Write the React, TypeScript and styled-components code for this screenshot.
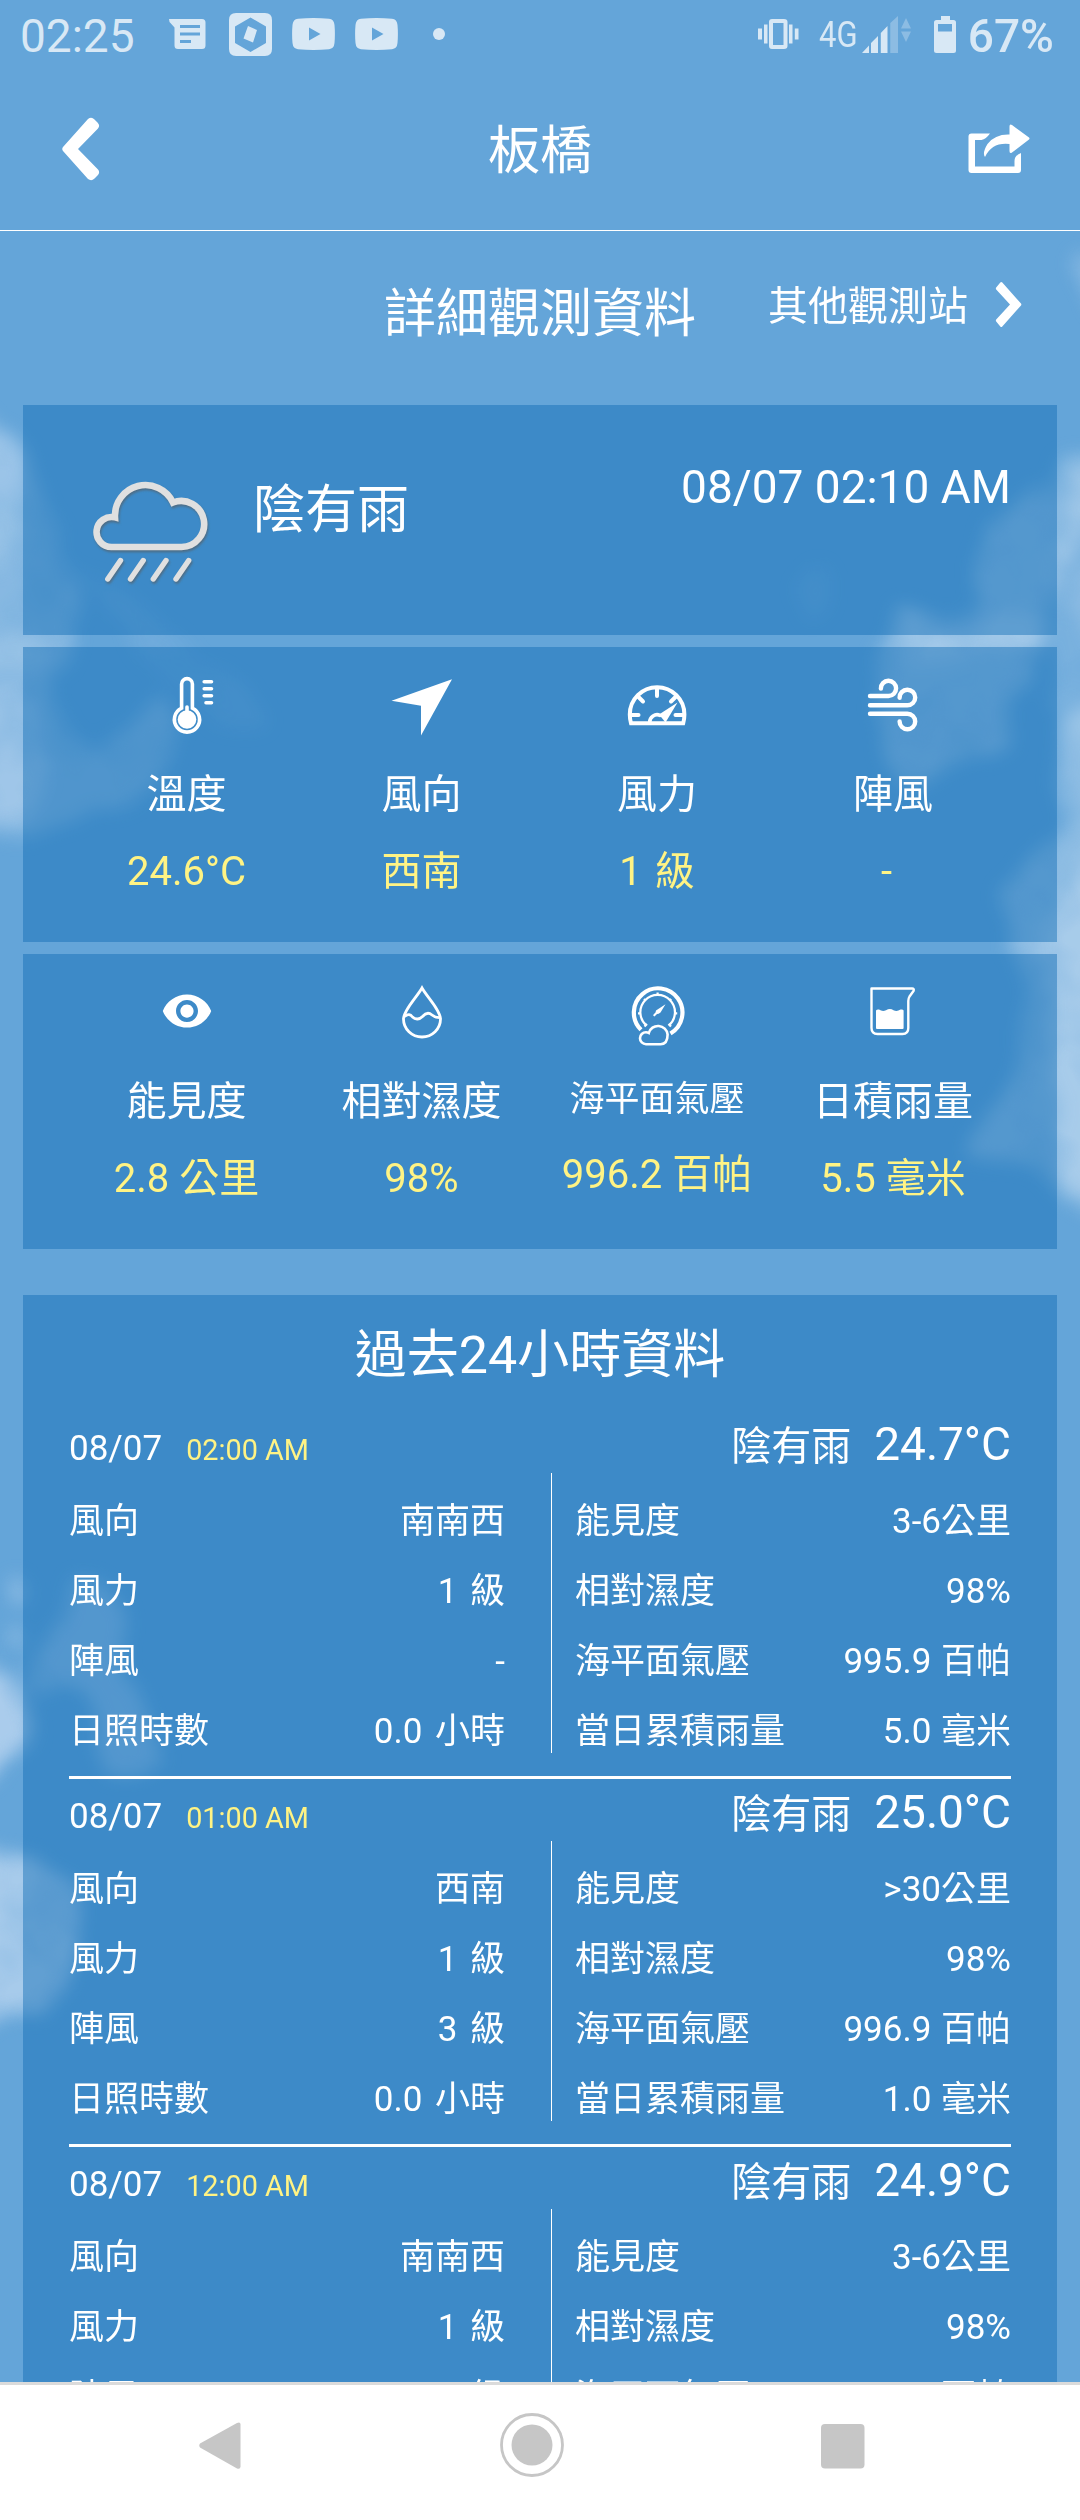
import * as React from 'react';
import styled, { createGlobalStyle } from 'styled-components';

const GlobalStyle = createGlobalStyle`
  * {
    box-sizing: border-box;
  }

  body {
    margin: 0;
    font-family: Roboto, 'Noto Sans CJK TC', sans-serif;
    color: #ffffff;
  }
`;

const Screen = styled.div`
  position: relative;
  isolation: isolate;
  width: 1080px;
  height: 2520px;
  display: flex;
  flex-direction: column;
  background: #64a5d9;
  overflow: hidden;
`;

const Sky = styled.svg`
  position: absolute;
  top: 0;
  left: 0;
  z-index: -1;
`;

const StatusBarWrapper = styled.div`
  height: 68px;
  flex: none;
  display: flex;
  align-items: center;
  justify-content: space-between;
  padding: 0 26px 0 20px;
  color: #d8e8f5;

  svg {
    display: block;
    fill: currentColor;
  }

  > div {
    display: flex;
    align-items: center;
  }
`;

const StatusText = styled.span<{ $weight?: number }>`
  font-size: 46px;
  font-weight: ${(p) => p.$weight ?? 400};
  line-height: 64px;
  padding-top: 3px;
`;

const NetworkType = styled.span`
  display: block;
  width: 38px;
  margin-left: 20px;
  font-size: 36px;
  line-height: 64px;
  padding-top: 2px;
  transform: scaleX(0.86);
  transform-origin: left center;
`;

const SignalIcon = styled.svg`
  margin-left: 5px;
`;

const BatteryIcon = styled.svg`
  margin: 0 12px 0 20px;
`;

const StatusIcons = styled.div`
  display: flex;
  align-items: center;
  gap: 20px;
  margin-left: 34px;

  > svg:first-child {
    margin-right: 3px;
  }
`;

const AppHeader = styled.header`
  height: 163px;
  flex: none;
  display: flex;
  align-items: center;
  justify-content: space-between;
  padding: 0 50px;
  border-bottom: 1px solid #ffffff;

  h1 {
    margin: 5px 0 0;
    font-size: 52px;
    line-height: 60px;
    font-weight: 400;
  }

  svg {
    display: block;
  }
`;

const HeaderSide = styled.div<{ $end?: boolean }>`
  width: 70px;
  display: flex;
  justify-content: ${(p) => (p.$end ? 'flex-end' : 'flex-start')};
  padding-left: ${(p) => (p.$end ? 0 : 10)}px;
`;

const Content = styled.main`
  flex: 1;
  min-height: 0;
  overflow: hidden;
  padding: 0 23px;
`;

const SectionHead = styled.div`
  height: 174px;
  display: grid;
  grid-template-columns: 1fr auto 1fr;
  align-items: start;
  padding: 50px 34px 0 34px;

  h2 {
    grid-column: 2;
    margin: 4px 0 0;
    font-size: 52px;
    line-height: 60px;
    font-weight: 400;
  }
`;

const StationLink = styled.a`
  display: flex;
  align-items: center;
  justify-content: flex-end;
  gap: 27px;
  font-size: 40px;
  line-height: 50px;

  svg {
    margin-bottom: 5px;
  }
`;

const Card = styled.section`
  background: rgba(14, 107, 180, 0.45);
`;

const SummaryCard = styled(Card)`
  height: 230px;
  margin-bottom: 12px;
  display: flex;
  padding: 51px 46px 0 67px;

  > svg {
    flex: none;
    margin-top: 22px;
    overflow: visible;
    filter: drop-shadow(1px 2px 1px rgba(90, 90, 90, 0.6));
  }
`;

const Weather = styled.div`
  flex: 1;
  margin: 25px 0 0 43px;
  font-size: 52px;
  line-height: 60px;
`;

const ObservedAt = styled.time`
  font-size: 46px;
  line-height: 63px;
`;

const MetricsCard = styled(Card)`
  height: 295px;
  margin-bottom: 12px;
  display: grid;
  grid-template-columns: 235px 235px 236px 236px;
  justify-content: center;
  padding-top: 29px;
`;

const Metric = styled.div`
  display: flex;
  flex-direction: column;
  align-items: center;
  white-space: pre;

  svg {
    overflow: visible;
    margin-bottom: 34px;
  }
`;

const MetricLabel = styled.div<{ $compact?: boolean }>`
  font-size: ${(p) => (p.$compact ? 35 : 40)}px;
  line-height: ${(p) => (p.$compact ? 46 : 50)}px;
  margin-bottom: 27px;
`;

const MetricValue = styled.div<{ $spaced?: boolean }>`
  font-size: 40px;
  line-height: 50px;
  word-spacing: ${(p) => (p.$spaced ? 3 : 0)}px;
  color: #fff384;
`;

const HistoryCard = styled(Card)`
  margin-top: 46px;
  padding: 21px 46px 0;

  h2 {
    margin: 0 0 15px;
    font-size: 52px;
    line-height: 80px;
    font-weight: 400;
    text-align: center;
  }
`;

const Entry = styled.article`
  border-bottom: 3px solid #ffffff;
  padding-bottom: 23px;
`;

const EntryHead = styled.div`
  height: 62px;
  padding-top: 4px;
  display: flex;
  align-items: baseline;
  line-height: 58px;
  font-size: 35px;
`;

const EntryTime = styled.time`
  flex: 1;
  margin-left: 24px;
  font-size: 28.8px;
  color: #fff384;
`;

const EntryWeather = styled.span`
  font-size: 40px;
  margin-right: 23px;
`;

const EntryTemp = styled.span`
  font-size: 46px;
`;

const EntryBody = styled.div`
  display: grid;
  grid-template-columns: 482px 1fr;
`;

const EntryColumn = styled.dl<{ $divided?: boolean }>`
  margin: 0;
  padding: ${(p) => (p.$divided ? '0 0 0 23px' : '0 46px 0 0')};
  border-left: ${(p) => (p.$divided ? '1px solid #ffffff' : 'none')};
  word-spacing: ${(p) => (p.$divided ? 1 : 4)}px;
`;

const EntryRow = styled.div`
  height: 70px;
  padding-top: 27px;
  display: flex;
  justify-content: space-between;
  font-size: 35px;
  line-height: 43px;
  white-space: pre;

  dd {
    margin: 0;
  }
`;

const NavBar = styled.nav`
  height: 138px;
  flex: none;
  display: grid;
  grid-template-columns: 439px 186px 435px;
  justify-items: center;
  padding-top: 28px;
  background: #ffffff;
  border-top: 3px solid #dbdbdb;

  svg {
    display: block;
  }
`;

function Clouds() {
  return (
    <Sky width="1080" height="2520" viewBox="0 0 1080 2520">
      <defs>
        <filter
          id="puff"
          filterUnits="userSpaceOnUse"
          x="-100"
          y="200"
          width="1280"
          height="2000"
          colorInterpolationFilters="sRGB"
        >
          <feTurbulence type="fractalNoise" baseFrequency="0.013" numOctaves="3" seed="7" result="noise" />
          <feDisplacementMap in="SourceGraphic" in2="noise" scale="44" xChannelSelector="R" yChannelSelector="G" />
          <feGaussianBlur stdDeviation="9" result="soft" />
          <feColorMatrix
            in="noise"
            type="matrix"
            values="0 0 0 0 1  0 0 0 0 1  0 0 0 0 1  0 0 0.8 0 0.55"
            result="density"
          />
          <feComposite in="soft" in2="density" operator="in" />
        </filter>
      </defs>
      <g filter="url(#puff)" fill="#cbdff4">
        <path
          d="M-40 410 Q20 420 40 480 Q60 520 70 580 Q90 650 60 665 L50 700 Q70 740 110 750 L160 690 Q190 730 160 780 Q110 840 -40 840 Z"
          opacity="0.34"
        />
        <ellipse cx="0" cy="460" rx="26" ry="38" opacity="0.3" />
        <ellipse cx="0" cy="540" rx="24" ry="36" opacity="0.25" />
        <ellipse cx="20" cy="650" rx="40" ry="22" opacity="0.25" />
        <ellipse cx="-5" cy="760" rx="50" ry="70" opacity="0.35" />
        <path d="M60 560 Q150 600 200 660 Q270 690 260 730 Q200 720 150 660 Z" opacity="0.12" />
        <path d="M1110 250 L1076 260 Q1072 300 1110 320 Z" opacity="0.4" />
        <path
          d="M1110 455 Q1060 450 1040 480 Q1000 500 985 550 Q985 600 960 625 Q920 600 900 625 Q880 680 880 740 Q890 790 930 790 Q960 760 1000 750 L1010 690 Q1050 650 1070 560 Z"
          opacity="0.42"
        />
        <path d="M1110 470 L1060 470 L1055 600 L1110 640 Z" opacity="0.25" />
        <path d="M1110 560 L1060 600 L1040 700 L1110 760 Z" opacity="0.2" />
        <ellipse cx="975" cy="632" rx="75" ry="26" opacity="0.32" />
        <path
          d="M1110 700 L1065 720 Q1060 790 1070 830 Q1020 850 1000 890 Q1030 940 1010 960 Q1040 1000 1020 1060 Q1010 1100 975 1145 Q1010 1170 1050 1180 L1110 1230 Z"
          opacity="0.42"
        />
        <path d="M1110 830 Q1070 860 1055 920 L1045 1000 Q1055 1100 1045 1160 L1110 1210 Z" opacity="0.42" />
        <path
          d="M70 1590 Q110 1580 125 1620 Q140 1700 170 1760 Q120 1790 95 1750 Q110 1700 60 1680 Q20 1710 30 1670 Q60 1620 70 1590 Z"
          opacity="0.4"
        />
        <path d="M-40 1670 Q20 1665 28 1710 Q34 1765 -40 1785 Z" opacity="0.68" />
        <path d="M-40 1850 Q40 1850 75 1890 Q90 1950 50 2010 L-40 2040 Z" opacity="0.65" />
        <ellipse cx="13" cy="1587" rx="9" ry="12" opacity="0.4" />
        <ellipse cx="16" cy="1635" rx="9" ry="14" opacity="0.35" />
        <ellipse cx="808" cy="590" rx="16" ry="26" opacity="0.1" />
      </g>
    </Sky>
  );
}

function PlayBadge() {
  return (
    <svg width="43" height="32" viewBox="0 0 43 32">
      <path
        fillRule="evenodd"
        d="M6 .8Q21.500-.8 37 .8Q42 1.300 42.500 7Q43.300 16 42.500 25Q42 30.700 37 31.200Q21.500 32.800 6 31.200Q1 30.700.500 25Q-.3 16 .500 7Q1 1.300 6 .8ZM17 9.500V22.500L28.500 16Z"
      />
    </svg>
  );
}

function StatusBar() {
  return (
    <StatusBarWrapper>
      <div>
        <StatusText>02:25</StatusText>
        <StatusIcons>
          <svg width="37" height="30" viewBox="0 0 37 30">
            <path
              fillRule="evenodd"
              d="M0 0H33Q36.500 0 36.500 3.500V26.500Q36.500 30 33 30H9Q5.500 30 5.500 26.500V8.500L.500 3ZM11 6V9H31V6ZM11 13.500V16.500H31V13.500ZM11 21V24H22V21Z"
            />
          </svg>
          <svg width="43" height="43" viewBox="0 0 43 43">
            <path
              fillRule="evenodd"
              d="M7 0H36Q43 0 43 7V36Q43 43 36 43H7Q0 43 0 36V7Q0 0 7 0ZM21.500 4.500L6 13.500V30L21.500 39L37 30V13.500ZM19 13L28 17L24 29.500L14.500 25.500Z"
            />
          </svg>
          <PlayBadge />
          <PlayBadge />
          <svg width="44" height="12" viewBox="0 0 44 12">
            <circle cx="21" cy="6" r="6" />
          </svg>
        </StatusIcons>
      </div>
      <div>
        <svg width="41" height="30" viewBox="0 0 41 30">
          <path
            fillRule="evenodd"
            d="M14 0H26Q29.500 0 29.500 3V27Q29.500 30 26 30H14Q11 30 11 27V3Q11 0 14 0ZM15 4V26H25.500V4ZM0 9.500H4V20.500H0ZM6 5.500H9.500V24.500H6ZM31 5.500H34.500V24.500H31ZM36.800 9.500H40.500V20.500H36.800Z"
          />
        </svg>
        <NetworkType>4G</NetworkType>
        <SignalIcon width="52" height="37" viewBox="0 0 52 37">
          <path d="M0 37L7 29.500V37ZM9 27L16 20V37H9ZM18.800 17L25.500 10V37H18.800Z" />
          <path opacity="0.35" d="M28.300 7L36 0V37H28.300ZM44 2L49 12.500H39ZM39 15.500H49L44 26Z" />
        </SignalIcon>
        <BatteryIcon width="22" height="37" viewBox="0 0 22 37">
          <path
            fillRule="evenodd"
            d="M7 0H16V4H19.500Q22 4 22 6.500V34.500Q22 37 19.500 37H2.500Q0 37 0 34.500V6.500Q0 4 2.500 4H7ZM4 8V15.500H18V8Z"
          />
        </BatteryIcon>
        <StatusText $weight={500}>67%</StatusText>
      </div>
    </StatusBarWrapper>
  );
}

function ThermometerIcon() {
  return (
    <svg width="60" height="60" viewBox="0 0 60 60" fill="none" stroke="#ffffff" strokeWidth="3.6" strokeLinecap="round">
      <path d="M24.600 32.100V8a5.400 5.400 0 0 1 10.800 0V32.100A12.600 12.600 0 1 1 24.600 32.100Z" />
      <circle cx="30" cy="43.500" r="9.300" fill="#ffffff" stroke="none" />
      <path d="M30 31V40" />
      <path d="M47.200 5.700H54.500M47.200 12.700H54.500M47.200 19.700H54.500M49 26.700H54.500" />
    </svg>
  );
}

function DirectionIcon() {
  return (
    <svg width="60" height="60" viewBox="0 0 60 60" fill="#ffffff">
      <path d="M60 3.300L-.500 24.700L29 29.800V59.500Z" />
    </svg>
  );
}

function SpeedIcon() {
  return (
    <svg width="60" height="60" viewBox="0 0 60 60" fill="none" stroke="#ffffff" strokeWidth="3.600" strokeLinecap="round">
      <path
        d="M4 47.200Q2.800 43 2.800 38.500A27.300 27.300 0 0 1 57.400 38.500Q57.400 43 56.200 47.200Z"
        strokeWidth="4"
        strokeLinecap="butt"
      />
      <path d="M30 12V20M4 39H11.500M48.500 39H56M11.500 21L16 25.500M48.500 21L44 25.500" strokeWidth="4" />
      <path d="M22.700 46A7.400 7.400 0 0 1 33 39.300" />
      <path d="M50.500 26.500L32 38.500L38.500 46.500Z" fill="#ffffff" stroke="none" />
    </svg>
  );
}

function GustIcon() {
  return (
    <svg width="60" height="60" viewBox="0 0 60 60" fill="none" stroke="#ffffff" strokeWidth="4.400" strokeLinecap="round">
      <path d="M7 20H25.500a7.600 7.600 0 1 0-7.600-7.400" />
      <path d="M7 29.300H44.400a7.800 7.800 0 1 0-7.800-7.600" />
      <path d="M7 37.700H44.400a7.800 7.800 0 1 1-7.800 7.800" />
    </svg>
  );
}

function EyeIcon() {
  return (
    <svg width="60" height="60" viewBox="0 0 60 60" fill="#ffffff">
      <path
        transform="translate(3.600 1.700) scale(2.200)"
        d="M12 4.500C7 4.500 2.730 7.610 1 12c1.730 4.390 6 7.500 11 7.500s9.270-3.110 11-7.500c-1.730-4.390-6-7.500-11-7.500zM12 17c-2.760 0-5-2.240-5-5s2.240-5 5-5 5 2.240 5 5-2.240 5-5 5zm0-8c-1.660 0-3 1.340-3 3s1.340 3 3 3 3-1.340 3-3-1.340-3-3-3z"
      />
    </svg>
  );
}

function HumidityIcon() {
  return (
    <svg width="60" height="60" viewBox="0 0 60 60" fill="none" stroke="#ffffff" strokeWidth="2.800">
      <path d="M30 5C25 14 11.500 27 11.500 36a18.500 18 0 0 0 37 0C48.500 27 35 14 30 5Z" />
      <path d="M12.500 33.500C16 30.500 18.500 31.500 20.500 34C23.500 37 27.500 36.500 30.500 33.500C34 29.500 37 29.500 40 32Q43 34.500 47.500 34.700" />
    </svg>
  );
}

function BarometerIcon() {
  return (
    <svg width="60" height="60" viewBox="0 0 60 60" fill="none" stroke="#ffffff">
      <path d="M14 46.800A24.300 24.300 0 1 1 43.500 50.500" strokeWidth="4.200" />
      <path d="M19.300 42.300A17.300 17.300 0 1 1 42 42.300" strokeWidth="2.200" />
      <path
        d="M30.600 9.500V12M13.500 30.300H11M47.700 30.300H50.200M18.800 17.800L17 16M42.400 17.800L44.200 16M20 41L17.500 43.500M41.500 41L44 43.500"
        strokeWidth="2.200"
      />
      <path
        d="M38.500 21.300L33.500 29.500Q31.500 31 30 31L27.500 33.500Q25.500 33 26.500 31.500L28.500 29.500Q28.500 27 30.500 26.500Z"
        fill="#ffffff"
        stroke="none"
      />
      <path d="M19 61.200a6 6 0 0 1 0-12q1.500 0 2.800.8A9.600 9.600 0 0 1 40.600 51.500q0 9.700-7 9.700Z" strokeWidth="2.600" />
    </svg>
  );
}

function RainGaugeIcon() {
  return (
    <svg width="60" height="60" viewBox="0 0 60 60" fill="none" stroke="#ffffff" strokeWidth="2.400" strokeLinejoin="round">
      <path d="M8.500 5.500H49Q51.500 5.500 50.500 8L46.500 13.500Q45.300 15.500 45.300 18V45Q45.300 51 39.500 51H14.500Q8.500 51 8.500 45Z" />
      <path
        d="M13 27.500Q14 26 16 26.500Q19.500 29 23 27.200Q27 25 30.500 27.200Q34 29 37.500 26.500Q40 26 40.600 27.500V45Q40.600 46 39.600 46H14Q13 46 13 45Z"
        fill="#ffffff"
        stroke="none"
      />
    </svg>
  );
}

interface MetricItem {
  icon: React.ReactNode;
  label: string;
  value: string;
  compact?: boolean;
  spaced?: boolean;
}

const metricGroups: MetricItem[][] = [
  [
    { icon: <ThermometerIcon />, label: '溫度', value: '24.6°C' },
    { icon: <DirectionIcon />, label: '風向', value: '西南' },
    { icon: <SpeedIcon />, label: '風力', value: '1 級', spaced: true },
    { icon: <GustIcon />, label: '陣風', value: '- ', spaced: true },
  ],
  [
    { icon: <EyeIcon />, label: '能見度', value: '2.8 公里' },
    { icon: <HumidityIcon />, label: '相對濕度', value: '98%' },
    { icon: <BarometerIcon />, label: '海平面氣壓', value: '996.2 百帕', compact: true },
    { icon: <RainGaugeIcon />, label: '日積雨量', value: '5.5 毫米' },
  ],
];

interface HistoryEntry {
  date: string;
  time: string;
  weather: string;
  temp: string;
  wind: [string, string][];
  air: [string, string][];
}

const history: HistoryEntry[] = [
  {
    date: '08/07',
    time: '02:00 AM',
    weather: '陰有雨',
    temp: '24.7°C',
    wind: [
      ['風向', '南南西'],
      ['風力', '1 級'],
      ['陣風', '-'],
      ['日照時數', '0.0 小時'],
    ],
    air: [
      ['能見度', '3-6公里'],
      ['相對濕度', '98%'],
      ['海平面氣壓', '995.9 百帕'],
      ['當日累積雨量', '5.0 毫米'],
    ],
  },
  {
    date: '08/07',
    time: '01:00 AM',
    weather: '陰有雨',
    temp: '25.0°C',
    wind: [
      ['風向', '西南'],
      ['風力', '1 級'],
      ['陣風', '3 級'],
      ['日照時數', '0.0 小時'],
    ],
    air: [
      ['能見度', '>30公里'],
      ['相對濕度', '98%'],
      ['海平面氣壓', '996.9 百帕'],
      ['當日累積雨量', '1.0 毫米'],
    ],
  },
  {
    date: '08/07',
    time: '12:00 AM',
    weather: '陰有雨',
    temp: '24.9°C',
    wind: [
      ['風向', '南南西'],
      ['風力', '1 級'],
      ['陣風', '3 級'],
    ],
    air: [
      ['能見度', '3-6公里'],
      ['相對濕度', '98%'],
      ['海平面氣壓', '997.2 百帕'],
    ],
  },
];

function EntryRows({ rows }: { rows: [string, string][] }) {
  return (
    <>
      {rows.map(([label, value]) => (
        <EntryRow key={label}>
          <dt>{label}</dt>
          <dd>{value}</dd>
        </EntryRow>
      ))}
    </>
  );
}

export default function App() {
  return (
    <Screen>
      <GlobalStyle />
      <Clouds />
      <StatusBar />
      <AppHeader>
        <HeaderSide>
          <svg width="40" height="64" viewBox="0 0 40 64" fill="#ffffff">
            <path d="M28 2Q31.500-.500 34.500 2.500L37.500 5.500Q40.500 8.500 38 11.500L18 32L38 52.500Q40.500 55.500 37.500 58.500L34.500 61.500Q31.500 64.500 28 62L3 34Q1.500 32 3 30Z" />
          </svg>
        </HeaderSide>
        <h1>板橋</h1>
        <HeaderSide $end>
          <svg width="62" height="50" viewBox="0 0 62 50" fill="#ffffff">
            <path d="M22 9.500H3.500Q.500 9.500.500 12.500V46Q.500 49 3.500 49H50Q53 49 53 46V29Q46.500 31.500 46.500 37V42.500H7V16H13.500Q18 15 22 9.500Z" />
            <path d="M41.500 2.500Q41.500-.500 44 1L61 13.500Q62 14.500 61 15.500L44 28.500Q41.500 30 41.500 27V20Q24 18 17 33Q14 29 19.500 20Q27 10 41.500 10.500Z" />
          </svg>
        </HeaderSide>
      </AppHeader>
      <Content>
        <SectionHead>
          <h2>詳細觀測資料</h2>
          <StationLink>
            其他觀測站
            <svg width="28" height="47" viewBox="0 0 28 47" fill="#ffffff">
              <path d="M1.200 6.500L5.300 1.500Q6.300.500 7.300 1.500L26 22.500Q26.700 23.500 26 24.500L7.300 45.500Q6.300 46.500 5.300 45.500L1.200 40.500Q.500 39.500 1.200 38.500L15 23.500L1.200 8.500Q.500 7.500 1.200 6.500Z" />
            </svg>
          </StationLink>
        </SectionHead>

        <SummaryCard>
          <svg
            width="120"
            height="108"
            viewBox="0 0 120 108"
            fill="none"
            stroke="#e0e0e0"
            strokeWidth="6.600"
            strokeLinecap="round"
          >
            <path d="M21.500 69A15 15 0 1 1 25 39.400A30.500 30.500 0 0 1 83 24.500A23 23 0 1 1 91.500 69Z" />
            <path
              d="M30.500 82.500L17.800 101M53.200 82.500L40.500 101M76 82.500L63.300 101M98.700 82.500L86 101"
              strokeWidth="5.400"
            />
          </svg>
          <Weather>陰有雨</Weather>
          <ObservedAt>08/07 02:10 AM</ObservedAt>
        </SummaryCard>

        {metricGroups.map((group, index) => (
          <MetricsCard key={index}>
            {group.map(({ icon, label, value, compact, spaced }) => (
              <Metric key={label}>
                {icon}
                <MetricLabel $compact={compact}>{label}</MetricLabel>
                <MetricValue $spaced={spaced}>{value}</MetricValue>
              </Metric>
            ))}
          </MetricsCard>
        ))}

        <HistoryCard>
          <h2>過去24小時資料</h2>
          {history.map((entry) => (
            <Entry key={entry.time}>
              <EntryHead>
                {entry.date}
                <EntryTime>{entry.time}</EntryTime>
                <EntryWeather>{entry.weather}</EntryWeather>
                <EntryTemp>{entry.temp}</EntryTemp>
              </EntryHead>
              <EntryBody>
                <EntryColumn>
                  <EntryRows rows={entry.wind} />
                </EntryColumn>
                <EntryColumn $divided>
                  <EntryRows rows={entry.air} />
                </EntryColumn>
              </EntryBody>
            </Entry>
          ))}
        </HistoryCard>
      </Content>
      <NavBar>
        <svg width="42" height="64" viewBox="0 0 42 64" fill="#c6c6c6">
          <path d="M1 30.500Q-.500 32.500 1 34.500L38 55.500Q41.500 56.500 41.500 53.500V11.500Q41.500 8.500 38 10Z" />
        </svg>
        <svg width="64" height="64" viewBox="0 0 64 64" fill="#c6c6c6">
          <circle cx="32" cy="32" r="20.500" />
          <circle cx="32" cy="32" r="30.500" fill="none" stroke="#c6c6c6" strokeWidth="2.800" />
        </svg>
        <svg width="44" height="64" viewBox="0 0 44 64" fill="#c6c6c6">
          <rect x="0" y="11" width="43.500" height="44.500" rx="4" />
        </svg>
      </NavBar>
    </Screen>
  );
}
